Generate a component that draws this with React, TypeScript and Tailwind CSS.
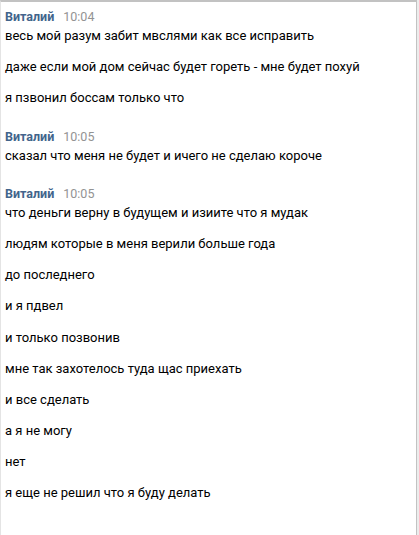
const GROUPS = [
  {
    name: "Виталий",
    time: "10:04",
    lines: [
      "весь мой разум забит мвслями как все исправить",
      "даже если мой дом сейчас будет гореть - мне будет похуй",
      "я пзвонил боссам только что",
    ],
  },
  {
    name: "Виталий",
    time: "10:05",
    lines: ["сказал что меня не будет и ичего не сделаю короче"],
  },
  {
    name: "Виталий",
    time: "10:05",
    lines: [
      "что деньги верну в будущем и изиите что я мудак",
      "людям которые в меня верили больше года",
      "до последнего",
      "и я пдвел",
      "и только позвонив",
      "мне так захотелось туда щас приехать",
      "и все сделать",
      "а я не могу",
      "нет",
      "я еще не решил что я буду делать",
    ],
  },
];

export default function App() {
  return (
    <div className="h-[535px] w-[419px] bg-[#ececec] pr-[2px] font-['Roboto','Liberation_Sans',sans-serif]">
      <div className="h-full border-t-2 border-l border-r border-t-[#c2c2c2] border-l-[#e4e4e4] border-r-[#c2c2c2] bg-white pl-[4px] pt-[6px]">
        {GROUPS.map((g, i) => (
          <div key={i} className={i === 0 ? "" : "pt-[7px]"}>
            <div className="flex items-baseline gap-[9px] leading-[18px]">
              <span className="text-[12.5px] font-bold text-[#42648b]">{g.name}</span>
              <span className="text-[12.5px] text-[#939393]">{g.time}</span>
            </div>
            <div className="mt-[1px]">
              {g.lines.map((l, j) => (
                <div key={j} className="mb-[13.2px] text-[13px] leading-[18px] text-black">
                  {l}
                </div>
              ))}
            </div>
          </div>
        ))}
      </div>
    </div>
  );
}
